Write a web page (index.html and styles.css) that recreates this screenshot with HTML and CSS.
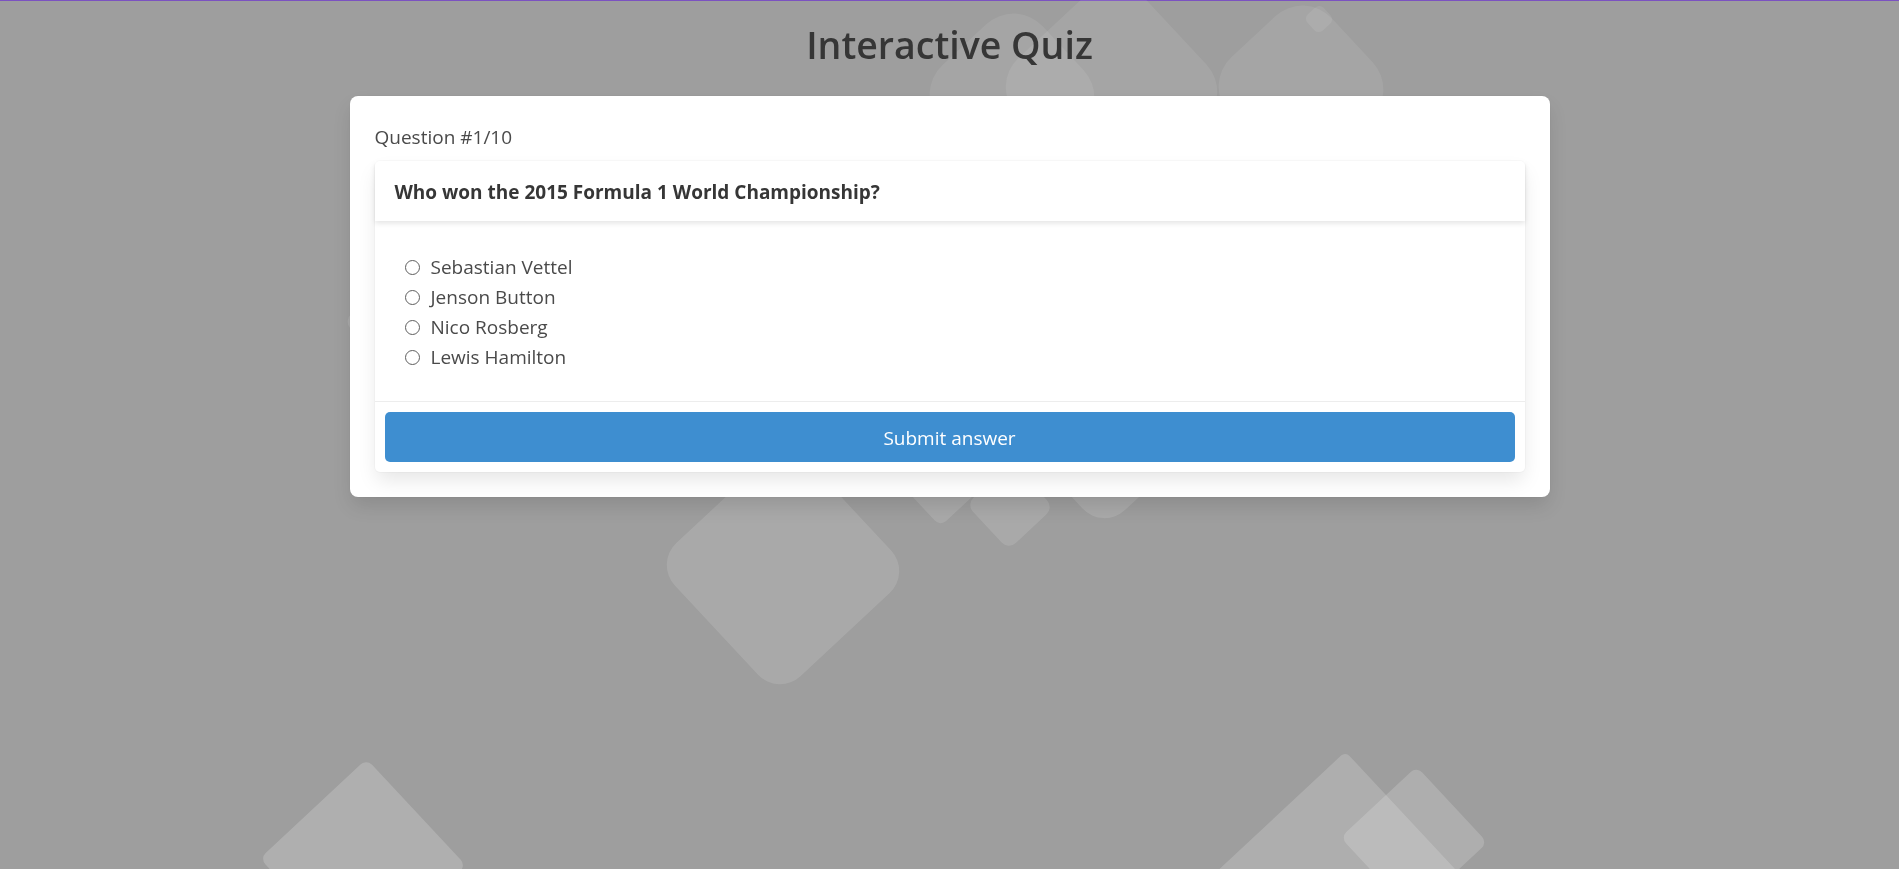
FILE: index.html
```html
<!DOCTYPE html>
<html lang="en">
<head>
<meta charset="utf-8">
<title>Interactive Quiz</title>
<link rel="stylesheet" href="styles.css">
</head>
<body>
<div class="bg" aria-hidden="true">
  <div class="shape" style="left:692px;top:477px;width:182px;height:182px;border-radius:30px;background:rgba(255,255,255,.12)"></div>
  <div class="shape" style="left:907px;top:442px;width:70px;height:70px;border-radius:8px;background:rgba(255,255,255,.12)"></div>
  <div class="shape" style="left:979px;top:475px;width:62px;height:62px;border-radius:10px;background:rgba(255,255,255,.12)"></div>
  <div class="shape" style="left:1065px;top:434px;width:80px;height:80px;border-radius:30px;background:rgba(255,255,255,.12)"></div>
  <div class="shape" style="left:360px;top:283px;width:80px;height:80px;border-radius:10px;background:rgba(255,255,255,.12)"></div>
  <div class="shape" style="left:942px;top:26px;width:140px;height:140px;border-radius:40px;background:rgba(255,255,255,.08)"></div>
  <div class="shape" style="left:1025px;top:3px;width:173px;height:173px;border-radius:40px;background:rgba(255,255,255,.08)"></div>
  <div class="shape" style="left:1231px;top:18px;width:140px;height:140px;border-radius:40px;background:rgba(255,255,255,.08)"></div>
  <div class="shape" style="left:1308px;top:8px;width:22px;height:22px;border-radius:6px;background:rgba(255,255,255,.08)"></div>
  <div class="shape" style="left:290px;top:789px;width:146px;height:146px;border-radius:8px;background:rgba(255,255,255,.18)"></div>
  <div class="shape" style="left:1230px;top:797px;width:220px;height:220px;border-radius:6px;background:rgba(255,255,255,.17)"></div>
  <div class="shape" style="left:1362px;top:788px;width:104px;height:104px;border-radius:8px;background:rgba(255,255,255,.17)"></div>
</div>

<main class="page">
  <h1 class="title">Interactive Quiz</h1>
  <section class="quiz-box">
    <p class="counter">Question #1/10</p>
    <div class="card">
      <header class="card-header">Who won the 2015 Formula 1 World Championship?</header>
      <div class="card-body">
        <label class="option"><input type="radio" name="answer" value="1"><span>Sebastian Vettel</span></label>
        <label class="option"><input type="radio" name="answer" value="2"><span>Jenson Button</span></label>
        <label class="option"><input type="radio" name="answer" value="3"><span>Nico Rosberg</span></label>
        <label class="option"><input type="radio" name="answer" value="4"><span>Lewis Hamilton</span></label>
      </div>
      <footer class="card-footer">
        <button class="submit" type="button">Submit answer</button>
      </footer>
    </div>
  </section>
</main>
</body>
</html>
```

FILE: styles.css
```css
* { box-sizing: border-box; }

html, body { height: 100%; }

body {
  margin: 0;
  border-top: 1px solid #7b52c1;
  background: #9e9e9e;
  font-family: "Open Sans", "Noto Sans", sans-serif;
  color: #4a4a4a;
  overflow: hidden;
  position: relative;
}

.bg {
  position: fixed;
  inset: 0;
  z-index: 0;
  pointer-events: none;
  overflow: hidden;
}

.shape {
  position: absolute;
  transform: rotate(47deg);
}

.page {
  position: relative;
  z-index: 1;
  padding-top: 21px;
}

.title {
  margin: 0 0 28px;
  font-size: 37.5px;
  font-weight: 600;
  line-height: 46px;
  text-align: center;
  color: #363636;
}

.quiz-box {
  width: 1200px;
  margin: 0 auto;
  background: #fff;
  border-radius: 8px;
  padding: 26px 25px 25px;
  box-shadow: 0 10px 20px -2.5px rgba(10,10,10,.12), 0 0 0 1px rgba(10,10,10,.02);
}

.counter {
  margin: 0 0 9px;
  font-size: 19px;
  line-height: 30px;
}

.card {
  background: #fff;
  border-radius: 5px;
  box-shadow: 0 10px 20px -2.5px rgba(10,10,10,.1), 0 0 0 1px rgba(10,10,10,.02);
}

.card-header {
  padding: 16px 20px 14px;
  font-size: 19px;
  font-weight: 700;
  line-height: 30px;
  color: #363636;
  box-shadow: 0 2.5px 5px rgba(10,10,10,.1);
}

.card-body {
  padding: 31px 25px 29px;
  display: flex;
  flex-direction: column;
}

.option {
  display: flex;
  align-items: center;
  font-size: 19px;
  line-height: 30px;
  cursor: pointer;
}

.option input {
  appearance: none;
  -webkit-appearance: none;
  width: 15px;
  height: 15px;
  margin: 0 11px 0 5px;
  border: 1px solid #5e5e5e;
  border-radius: 50%;
  background: #fff;
  flex: none;
}

.card-footer {
  border-top: 1px solid #ededed;
  padding: 10px;
}

.submit {
  display: flex;
  align-items: center;
  justify-content: center;
  width: 100%;
  height: 50px;
  padding: 2px 0 0;
  border: none;
  border-radius: 5px;
  background: #3e8ed0;
  color: #fff;
  font-family: inherit;
  font-size: 19px;
  cursor: pointer;
}
```
